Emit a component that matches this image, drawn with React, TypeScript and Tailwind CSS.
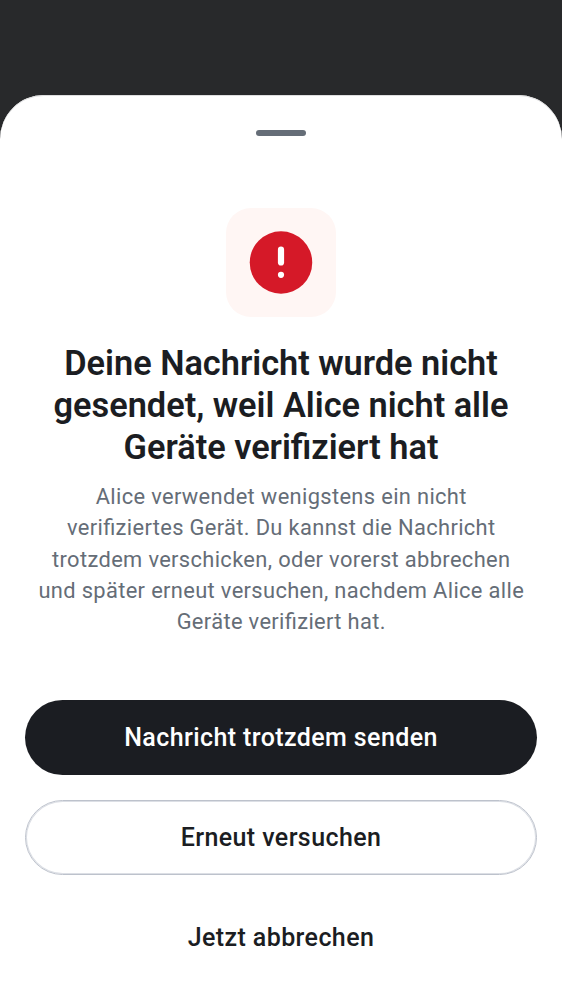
export default function App() {
  return (
    <main className="flex h-[1000px] w-[562px] flex-col overflow-hidden bg-[#28292b] pt-[95px] font-['Roboto',sans-serif] text-[#1b1d22]">
      <section className="flex flex-1 flex-col items-center rounded-t-[44px] bg-white px-[25px] shadow-[inset_0_1px_0_#dededf]">
        <div className="mt-[34.5px] h-[6.25px] w-[50px] shrink-0 rounded-full bg-[#656d77]" />
        <div className="mt-[72.25px] flex h-[109px] w-[110px] shrink-0 items-center justify-center rounded-[25px] bg-[#fff6f4]">
          <svg viewBox="0 0 64 63" className="h-[63px] w-[64px]">
            <circle cx="32" cy="31.5" r="31.25" fill="#d51928" />
            <rect x="28.9" y="15.6" width="6.2" height="19" rx="3.1" fill="#fff" />
            <circle cx="32" cy="43.8" r="3.1" fill="#fff" />
          </svg>
        </div>
        <h1 className="mt-[25px] text-center text-[34.375px] leading-[42px] font-semibold tracking-[-0.02px] whitespace-nowrap [font-feature-settings:'liga'_1]">
          Deine Nachricht wurde nicht<br />gesendet, weil Alice nicht alle<br />Geräte verifiziert hat
        </h1>
        <p className="mt-[13px] pl-[0.5px] text-center text-[21.875px] leading-[31.25px] tracking-[0.35px] whitespace-nowrap text-[#656d77] [font-feature-settings:'liga'_1]">
          Alice verwendet wenigstens ein nicht<br />verifiziertes Gerät. Du kannst die Nachricht<br />trotzdem verschicken, oder vorerst abbrechen<br />und später erneut versuchen, nachdem Alice alle<br />Geräte verifiziert hat.
        </p>
        <div className="mt-[62.75px] flex w-full flex-col gap-[25px] text-[25px] font-medium tracking-[0.4px]">
          <button className="h-[75px] rounded-full bg-[#1b1d22] text-white">Nachricht trotzdem senden</button>
          <button className="h-[75px] rounded-full border border-[#bdc2cc] shadow-[inset_0_0_0_1px_#dcdfe5]">Erneut versuchen</button>
          <button className="h-[75px] rounded-full">Jetzt abbrechen</button>
        </div>
      </section>
    </main>
  );
}
